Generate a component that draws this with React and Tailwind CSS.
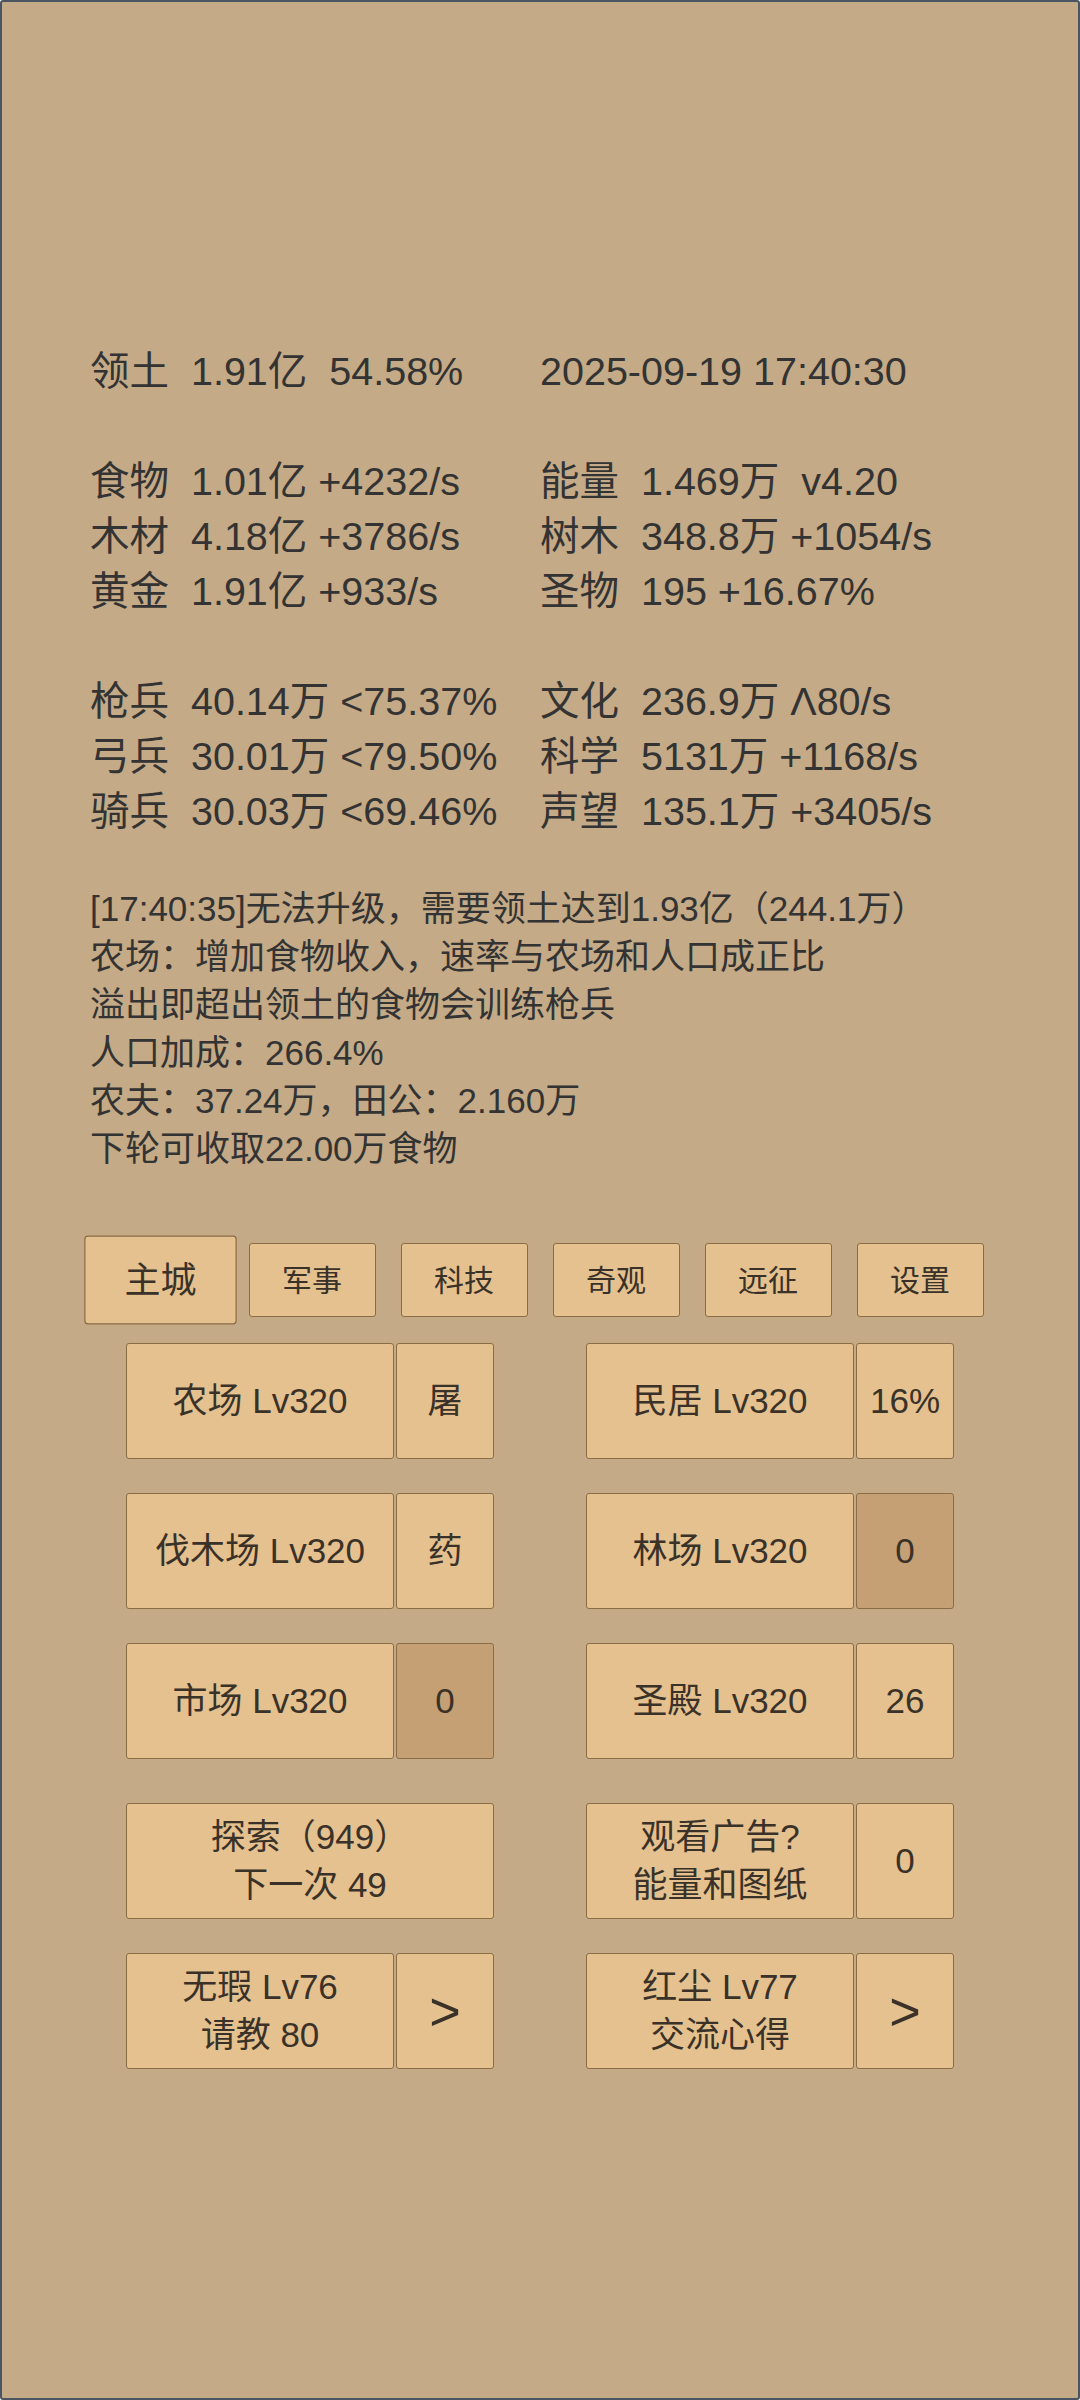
const font = { fontFamily: '"Liberation Sans", "Noto Sans CJK SC", sans-serif' };

const leftStats = [
  "领土  1.91亿  54.58%",
  "",
  "食物  1.01亿 +4232/s",
  "木材  4.18亿 +3786/s",
  "黄金  1.91亿 +933/s",
  "",
  "枪兵  40.14万 <75.37%",
  "弓兵  30.01万 <79.50%",
  "骑兵  30.03万 <69.46%",
];

const rightStats = [
  "2025-09-19 17:40:30",
  "",
  "能量  1.469万  v4.20",
  "树木  348.8万 +1054/s",
  "圣物  195 +16.67%",
  "",
  "文化  236.9万 Λ80/s",
  "科学  5131万 +1168/s",
  "声望  135.1万 +3405/s",
];

const logLines = [
  "[17:40:35]无法升级，需要领土达到1.93亿（244.1万）",
  "农场：增加食物收入，速率与农场和人口成正比",
  "溢出即超出领土的食物会训练枪兵",
  "人口加成：266.4%",
  "农夫：37.24万，田公：2.160万",
  "下轮可收取22.00万食物",
];

const tabs = ["主城", "军事", "科技", "奇观", "远征", "设置"];

const rows = [
  [
    { main: ["农场 Lv320"], side: "屠" },
    { main: ["民居 Lv320"], side: "16%" },
  ],
  [
    { main: ["伐木场 Lv320"], side: "药" },
    { main: ["林场 Lv320"], side: "0", dark: true },
  ],
  [
    { main: ["市场 Lv320"], side: "0", dark: true },
    { main: ["圣殿 Lv320"], side: "26" },
  ],
];

const Box = ({ children, className = "" }) => (
  <div
    className={`h-[116px] flex flex-col items-center justify-center rounded-[3px] border border-[#8a6c45] leading-[48px] text-[#3a3128] ${className}`}
  >
    {children}
  </div>
);

const Pair = ({ main, side, dark, big }) => (
  <div className="flex gap-[2px]">
    <Box className="w-[268px] bg-[#e4c18f] text-[35px]">
      {main.map((t) => (
        <span key={t}>{t}</span>
      ))}
    </Box>
    <Box className={`w-[98px] ${dark ? "bg-[#c4a074]" : "bg-[#e4c18f]"} ${big ? "text-[54px] font-light" : "text-[35px]"}`}>
      {side}
    </Box>
  </div>
);

export default function App() {
  return (
    <div
      style={font}
      className="h-[2400px] w-full bg-[#c4aa86] border-2 border-[#4a5563] rounded-[3px] text-[#333333] overflow-hidden"
    >
      <div className="pt-[342px] px-[88px] grid grid-cols-2 text-[39.5px] leading-[55px]">
        <div>
          {leftStats.map((l, i) => (
            <div key={i} className="whitespace-pre h-[55px]">{l}</div>
          ))}
        </div>
        <div>
          {rightStats.map((l, i) => (
            <div key={i} className="whitespace-pre h-[55px]">{l}</div>
          ))}
        </div>
      </div>

      <div className="mt-[46px] px-[88px] text-[35px] leading-[48px]">
        {logLines.map((l) => (
          <div key={l} className="whitespace-pre">{l}</div>
        ))}
      </div>

      <div className="mt-[70px] flex justify-center gap-[25px]">
        {tabs.map((t, i) => (
          <div
            key={t}
            className={`w-[127px] h-[74px] flex items-center justify-center rounded-[3px] border border-[#8a6c45] bg-[#e4c18f] text-[30px] text-[#3a3128] ${i === 0 ? "scale-120" : ""}`}
          >
            {t}
          </div>
        ))}
      </div>

      <div className="mt-[26px] flex flex-col items-center">
        <div className="flex flex-col gap-[34px]">
          {rows.map((r, i) => (
            <div key={i} className="flex gap-[92px]">
              <Pair {...r[0]} />
              <Pair {...r[1]} />
            </div>
          ))}
        </div>

        <div className="mt-[44px] flex flex-col gap-[34px]">
          <div className="flex gap-[92px]">
            <Box className="w-[368px] bg-[#e4c18f] text-[35px]">
              <span>探索（949）</span>
              <span>下一次 49</span>
            </Box>
            <Pair main={["观看广告?", "能量和图纸"]} side="0" />
          </div>
          <div className="flex gap-[92px]">
            <Pair main={["无瑕 Lv76", "请教 80"]} side=">" big />
            <Pair main={["红尘 Lv77", "交流心得"]} side=">" big />
          </div>
        </div>
      </div>
    </div>
  );
}
